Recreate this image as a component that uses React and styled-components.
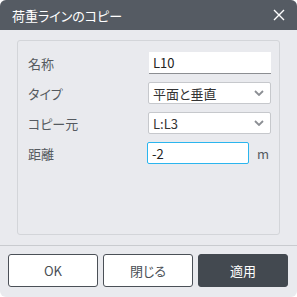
import React from 'react';
import styled, { createGlobalStyle } from 'styled-components';

const GlobalStyle = createGlobalStyle`
  html, body {
    margin: 0;
    padding: 0;
    background: #ffffff;
  }
  body {
    font-family: "Noto Sans CJK JP", "Noto Sans", sans-serif;
    font-feature-settings: "palt";
  }
`;

const Window = styled.div`
  width: 297px;
  height: 297px;
  display: flex;
  flex-direction: column;
  background: #e9eaee;
  border-radius: 6px;
  overflow: hidden;
`;
const TitleBar = styled.header`
  height: 30px;
  flex: none;
  display: flex;
  align-items: center;
  justify-content: space-between;
  padding: 0 10px 0 12px;
  background: #555b63;
  color: #ffffff;
  font-size: 13px;
`;
const CloseButton = styled.button`
  all: unset;
  display: flex;
  align-items: center;
  justify-content: center;
  width: 16px;
  height: 16px;
  cursor: pointer;
`;
const Content = styled.div`
  flex: 1;
  padding: 10px 17px 10px 17px;
  display: flex;
`;
const Panel = styled.section`
  flex: 1;
  border: 1px solid #d3d5d9;
  border-radius: 3px;
  padding: 11px 8px 0 10px;
  display: flex;
  flex-direction: column;
  gap: 8px;
`;
const Row = styled.div`
  display: grid;
  grid-template-columns: ${(p) => p.$labelWidth || 120}px 1fr;
  align-items: center;
  height: 22px;
`;
const Label = styled.span`
  font-size: 13px;
  color: #555a60;
`;
const TextInput = styled.div`
  box-sizing: border-box;
  height: 22px;
  display: flex;
  align-items: center;
  padding: 0 4px;
  background: #ffffff;
  font-size: 13px;
  color: #222;
  border-bottom: 1px solid #8c8e92;
  margin-left: 1px;
`;
const Select = styled.div`
  box-sizing: border-box;
  height: 22px;
  display: flex;
  align-items: center;
  justify-content: space-between;
  padding: 0 6px 0 4px;
  background: #ffffff;
  border: 1px solid #c6c8cc;
  border-radius: 2px;
  font-size: 13px;
  color: #333;
`;
const UnitField = styled.div`
  display: flex;
  align-items: center;
  margin-left: -1px;
`;
const FocusInput = styled.div`
  box-sizing: border-box;
  width: 102px;
  height: 22px;
  display: flex;
  align-items: center;
  padding: 0 4px;
  background: #ffffff;
  border: 1px solid #2bb5ee;
  border-radius: 2px;
  font-size: 13px;
  color: #222;
`;
const Unit = styled.span`
  margin-left: 8px;
  font-size: 13px;
  color: #555a60;
`;
const Footer = styled.footer`
  flex: none;
  border-top: 1px solid #c9cbcf;
  padding: 8px 9px 10px 8px;
  display: grid;
  grid-template-columns: repeat(3, 1fr);
  gap: 5px;
`;
const Button = styled.button`
  all: unset;
  box-sizing: border-box;
  height: 33px;
  display: flex;
  align-items: center;
  justify-content: center;
  border-radius: 3px;
  font-size: 13px;
  cursor: pointer;
  border: 1px solid ${(p) => (p.$primary ? '#434950' : '#4b5057')};
  background: ${(p) => (p.$primary ? '#434950' : '#ffffff')};
  color: ${(p) => (p.$primary ? '#ffffff' : '#4a4f55')};
`;

function Chevron() {
  return (
    <svg width="10" height="6" viewBox="0 0 10 6">
      <polyline points="1,1 5,5 9,1" fill="none" stroke="#8b8e93" strokeWidth="1.8" />
    </svg>
  );
}

export default function App() {
  return (
    <Window>
      <GlobalStyle />
      <TitleBar>
        <span>荷重ラインのコピー</span>
        <CloseButton>
          <svg width="12" height="12" viewBox="0 0 12 12">
            <path d="M1 1L11 11M11 1L1 11" stroke="#ffffff" strokeWidth="1.4" />
          </svg>
        </CloseButton>
      </TitleBar>
      <Content>
        <Panel>
          <Row>
            <Label>名称</Label>
            <TextInput>L10</TextInput>
          </Row>
          <Row>
            <Label>タイプ</Label>
            <Select>
              <span>平面と垂直</span>
              <Chevron />
            </Select>
          </Row>
          <Row>
            <Label>コピー元</Label>
            <Select>
              <span>L:L3</span>
              <Chevron />
            </Select>
          </Row>
          <Row>
            <Label>距離</Label>
            <UnitField>
              <FocusInput>-2</FocusInput>
              <Unit>m</Unit>
            </UnitField>
          </Row>
        </Panel>
      </Content>
      <Footer>
        <Button>OK</Button>
        <Button>閉じる</Button>
        <Button $primary>適用</Button>
      </Footer>
    </Window>
  );
}
